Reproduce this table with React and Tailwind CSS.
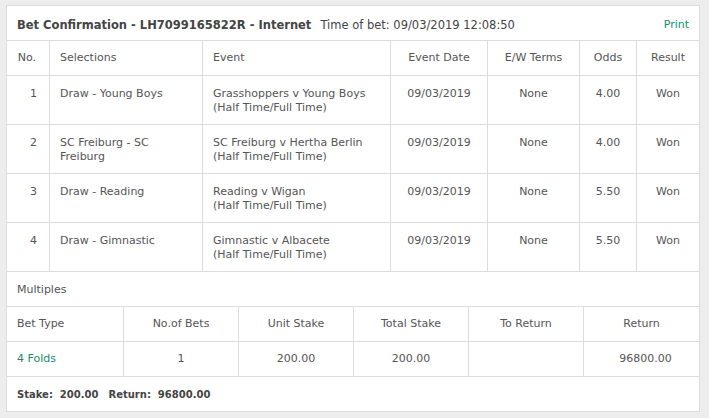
import React from "react";

const font = { fontFamily: '"DejaVu Sans", Verdana, sans-serif' };

const rows = [
  { n: "1", sel: "Draw - Young Boys", ev: "Grasshoppers v Young Boys", odds: "4.00" },
  { n: "2", sel: "SC Freiburg - SC Freiburg", ev: "SC Freiburg v Hertha Berlin", odds: "4.00" },
  { n: "3", sel: "Draw - Reading", ev: "Reading v Wigan", odds: "5.50" },
  { n: "4", sel: "Draw - Gimnastic", ev: "Gimnastic v Albacete", odds: "5.50" },
];

const mainCols = "grid grid-cols-[42px_153px_188px_97px_92px_57px_63px]";
const multCols = "grid grid-cols-[116px_115px_115px_115px_115px_116px]";

export default function App() {
  return (
    <div className="w-[709px] h-[418px] bg-[#ededed] pt-[5px] pl-[6px]" style={font}>
      <div className="w-[694px] border border-[#dcdcdc] bg-white text-[11px] leading-[14px] text-[#555]">
        {/* title */}
        <div className="h-[34px] flex items-center pl-[10px] pr-[10px] pt-[4px]">
          <span className="font-bold text-[11.5px] text-[#444]">Bet Confirmation - LH7099165822R - Internet</span>
          <span className="ml-[9px] text-[11.5px] text-[#444]">Time of bet: 09/03/2019 12:08:50</span>
          <span className="ml-auto text-[#1a8a6c]">Print</span>
        </div>
        {/* header */}
        <div className={`${mainCols} h-[35px] border-t border-[#dcdcdc] items-stretch`}>
          <div className="flex items-center justify-end pr-[13px]">No.</div>
          <div className="flex items-center border-l border-[#dcdcdc] pl-[10px]">Selections</div>
          <div className="flex items-center border-l border-[#dcdcdc] pl-[10px]">Event</div>
          <div className="flex items-center justify-center border-l border-[#dcdcdc]">Event Date</div>
          <div className="flex items-center justify-center border-l border-[#dcdcdc]">E/W Terms</div>
          <div className="flex items-center justify-center border-l border-[#dcdcdc]">Odds</div>
          <div className="flex items-center justify-center border-l border-[#dcdcdc]">Result</div>
        </div>
        {rows.map((r) => (
          <div key={r.n} className={`${mainCols} h-[49px] border-t border-[#dcdcdc]`}>
            <div className="pt-[11px] text-right pr-[12px]">{r.n}</div>
            <div className="pt-[11px] border-l border-[#dcdcdc] pl-[10px] pr-[8px]">{r.sel}</div>
            <div className="pt-[11px] border-l border-[#dcdcdc] pl-[10px]">
              <div>{r.ev}</div>
              <div>(Half Time/Full Time)</div>
            </div>
            <div className="pt-[11px] border-l border-[#dcdcdc] text-center">09/03/2019</div>
            <div className="pt-[11px] border-l border-[#dcdcdc] text-center">None</div>
            <div className="pt-[11px] border-l border-[#dcdcdc] text-center">{r.odds}</div>
            <div className="pt-[11px] border-l border-[#dcdcdc] text-center">Won</div>
          </div>
        ))}
        {/* multiples */}
        <div className="h-[35px] border-t border-[#dcdcdc] flex items-center pl-[10px] pt-[2px]">Multiples</div>
        <div className={`${multCols} h-[35px] border-t border-[#dcdcdc]`}>
          <div className="flex items-center pl-[10px]">Bet Type</div>
          <div className="flex items-center justify-center border-l border-[#dcdcdc]">No.of Bets</div>
          <div className="flex items-center justify-center border-l border-[#dcdcdc]">Unit Stake</div>
          <div className="flex items-center justify-center border-l border-[#dcdcdc]">Total Stake</div>
          <div className="flex items-center justify-center border-l border-[#dcdcdc]">To Return</div>
          <div className="flex items-center justify-center border-l border-[#dcdcdc]">Return</div>
        </div>
        <div className={`${multCols} h-[35px] border-t border-[#dcdcdc]`}>
          <div className="flex items-center pl-[10px] text-[#1a8a6c]">4 Folds</div>
          <div className="flex items-center justify-center border-l border-[#dcdcdc]">1</div>
          <div className="flex items-center justify-center border-l border-[#dcdcdc]">200.00</div>
          <div className="flex items-center justify-center border-l border-[#dcdcdc]">200.00</div>
          <div className="flex items-center justify-center border-l border-[#dcdcdc]"></div>
          <div className="flex items-center justify-center border-l border-[#dcdcdc] pl-[8px]">96800.00</div>
        </div>
        <div className="h-[35px] border-t border-[#dcdcdc] flex items-center pl-[10px] pt-[1px] font-bold text-[10px] text-[#444]">
          <span>Stake:&nbsp; 200.00</span>
          <span className="ml-[10px]">Return:&nbsp; 96800.00</span>
        </div>
      </div>
    </div>
  );
}
